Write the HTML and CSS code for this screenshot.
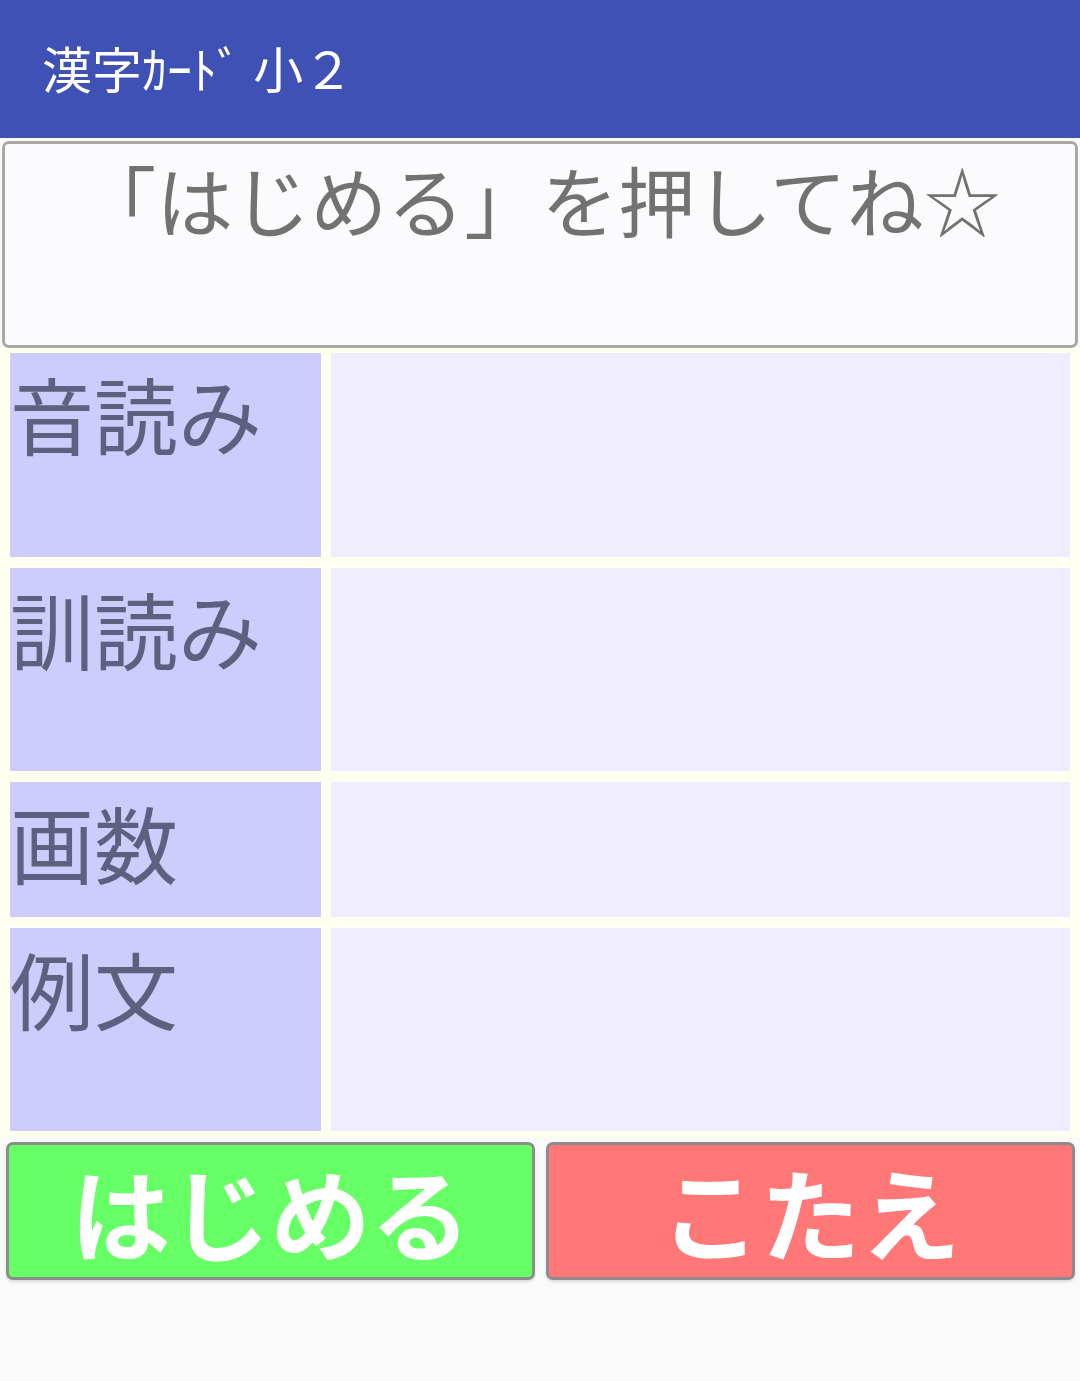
FILE: index.html
```html
<!DOCTYPE html>
<html lang="ja">
<head>
<meta charset="utf-8">
<title>漢字ｶｰﾄﾞ 小２</title>
<link rel="stylesheet" href="styles.css">
</head>
<body>
<header class="appbar"><span class="appbar-title">漢字ｶｰﾄﾞ 小２</span></header>
<div class="message">「はじめる」を押してね☆</div>
<div class="card-grid">
  <div class="label">音読み</div><div class="value"></div>
  <div class="label">訓読み</div><div class="value"></div>
  <div class="label">画数</div><div class="value"></div>
  <div class="label">例文</div><div class="value"></div>
</div>
<div class="actions">
  <button class="btn btn-start">はじめる</button>
  <button class="btn btn-answer">こたえ</button>
</div>
</body>
</html>
```
FILE: styles.css
```css
html, body {
  margin: 0;
  padding: 0;
}
body {
  width: 1080px;
  height: 1381px;
  background: #fafafa;
  font-family: "Noto Sans CJK JP", "Noto Sans", sans-serif;
  overflow: hidden;
}
.appbar {
  height: 138px;
  background: #3f51b5;
  display: flex;
  align-items: center;
  padding-left: 42px;
  padding-bottom: 4px;
  box-sizing: border-box;
}
.appbar-title {
  color: #ffffff;
  font-size: 50px;
  line-height: 1;
}
.message {
  margin: 3px 2px 0 2px;
  height: 207px;
  box-sizing: border-box;
  border: 3px solid #a9a9a3;
  border-radius: 7px;
  background: #fbfbfd;
  color: #727272;
  font-size: 77px;
  text-align: center;
  line-height: 1.42;
  white-space: nowrap;
}
.card-grid {
  display: grid;
  grid-template-columns: 311px 739px;
  grid-template-rows: 204px 203px 135px 203px;
  column-gap: 10px;
  row-gap: 11px;
  padding: 5px 10px 6px 10px;
  background: #fffff0;
}
.label {
  background: #ccccfd;
  color: #5f6080;
  font-size: 84px;
  line-height: 1.42;
  white-space: nowrap;
  overflow: hidden;
}
.value {
  background: #eeecfe;
}
.actions {
  display: flex;
  gap: 11px;
  padding: 5px 5px 0 6px;
}
.btn {
  flex: 1;
  height: 138px;
  box-sizing: border-box;
  border: 3px solid #8c8c8c;
  border-radius: 7px;
  color: #ffffff;
  font-family: "Noto Sans CJK JP", "Noto Sans", sans-serif;
  font-weight: 700;
  font-size: 100px;
  line-height: 1;
  display: flex;
  align-items: center;
  justify-content: center;
  padding: 0;
  box-shadow: 0 2px 3px rgba(0,0,0,0.12);
}
.btn-start {
  background: #66ff66;
}
.btn-answer {
  background: #ff7777;
}
```
